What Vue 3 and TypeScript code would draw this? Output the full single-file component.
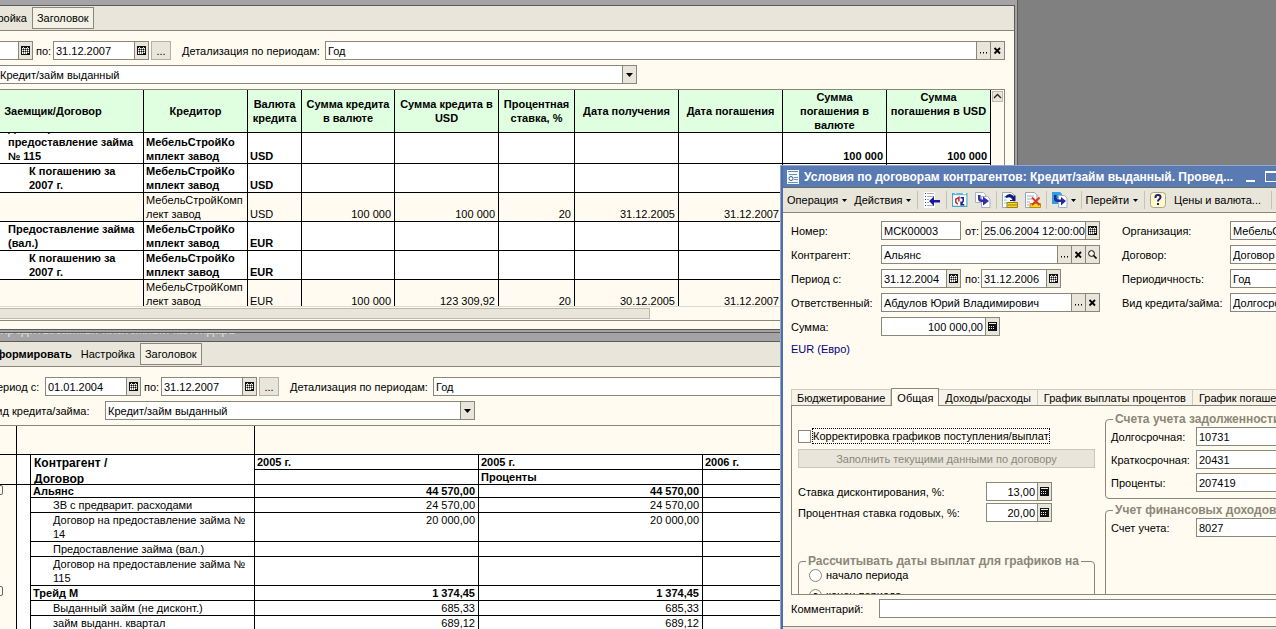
<script setup lang="ts">
import { ref } from 'vue'

interface LoanRow {
  name: string
  level: number
  creditor: string
  currency: string
  cells: string[]
}

interface PaymentRow {
  name: string
  bold: boolean
  group?: boolean
  first: string
  second: string
}

const loanHeaders: string[] = [
  'Заемщик/Договор',
  'Кредитор',
  'Валюта\nкредита',
  'Сумма кредита\nв валюте',
  'Сумма кредита в\nUSD',
  'Процентная\nставка, %',
  'Дата получения',
  'Дата погашения',
  'Сумма\nпогашения в\nвалюте',
  'Сумма\nпогашения в USD\n\u00a0',
]

const boldCreditor = 'МебельСтройКо\nмплект завод'
const plainCreditor = 'МебельСтройКомп\nлект завод'

const loans: LoanRow[] = [
  { name: 'Договор на\nпредоставление займа\n№ 115', level: 1, creditor: boldCreditor, currency: 'USD', cells: ['', '', '', '', '', '100 000', '100 000'] },
  { name: 'К погашению за\n2007 г.', level: 2, creditor: boldCreditor, currency: 'USD', cells: ['', '', '', '', '', '', ''] },
  { name: '', level: 3, creditor: plainCreditor, currency: 'USD', cells: ['100 000', '100 000', '20', '31.12.2005', '31.12.2007', '', ''] },
  { name: 'Предоставление займа\n(вал.)', level: 1, creditor: boldCreditor, currency: 'EUR', cells: ['', '', '', '', '', '', ''] },
  { name: 'К погашению за\n2007 г.', level: 2, creditor: boldCreditor, currency: 'EUR', cells: ['', '', '', '', '', '', ''] },
  { name: '', level: 3, creditor: plainCreditor, currency: 'EUR', cells: ['100 000', '123 309,92', '20', '30.12.2005', '31.12.2007', '', ''] },
]

const payments: PaymentRow[] = [
  { name: 'Альянс', bold: true, group: true, first: '44 570,00', second: '44 570,00' },
  { name: 'ЗВ с предварит. расходами', bold: false, first: '24 570,00', second: '24 570,00' },
  { name: 'Договор на предоставление займа №\n14', bold: false, first: '20 000,00', second: '20 000,00' },
  { name: 'Предоставление займа (вал.)', bold: false, first: '', second: '' },
  { name: 'Договор на предоставление займа №\n115', bold: false, first: '', second: '' },
  { name: 'Трейд М', bold: true, group: true, first: '1 374,45', second: '1 374,45' },
  { name: 'Выданный займ (не дисконт.)', bold: false, first: '685,33', second: '685,33' },
  { name: 'займ выданн. квартал', bold: false, first: '689,12', second: '689,12' },
]

const tabs: string[] = ['Бюджетирование', 'Общая', 'Доходы/расходы', 'График выплаты процентов', 'График погашения']
const activeTab = ref('Общая')
const adjustSchedules = ref(false)
const payoutDate = ref('end')

const debtAccounts = [
  { id: 'acc-long', label: 'Долгосрочная:', value: '10731' },
  { id: 'acc-short', label: 'Краткосрочная:', value: '20431' },
  { id: 'acc-percent', label: 'Проценты:', value: '207419' },
]

const contractFields = [
  { id: 'org', label: 'Организация:', value: 'МебельСтройКомплект завод' },
  { id: 'contract', label: 'Договор:', value: 'Договор на предоставление займа' },
  { id: 'period', label: 'Периодичность:', value: 'Год' },
  { id: 'kind', label: 'Вид кредита/займа:', value: 'Долгосрочный' },
]
</script>

<template>
  <main class="desktop">
    <svg class="sprite" aria-hidden="true">
      <symbol id="i-calendar" viewBox="0 0 9 9">
        <path d="M0 0h9v9H0z" fill="#111" />
        <path d="M1 2h7v6H1z" fill="#fff" />
        <path d="M2 1h1v1H2zM6 1h1v1H6z" fill="#ddd" />
        <path d="M2 2h1v6H2zM4 2h1v6H4zM6 2h1v6H6zM1 3h7v1H1zM1 5h7v1H1z" fill="#222" fill-opacity=".55" />
        <path d="M2 3h1v1H2zM4 3h1v1H4zM6 3h1v1H6zM2 5h1v1H2zM4 5h1v1H4zM6 5h1v1H6zM6 7h2v1H6z" fill="#111" />
      </symbol>
      <symbol id="i-calc" viewBox="0 0 9 9">
        <path d="M0 0h9v9H0z" fill="#111" />
        <path d="M1 1h7v1H1zM1 4h1v1H1zM3 4h1v1H3zM5 4h1v1H5zM1 6h1v1H1zM3 6h1v1H3zM5 6h1v1H5z" fill="#eee" />
      </symbol>
      <symbol id="i-cross" viewBox="0 0 9 9">
        <path d="M1.500 2l5.500 5.500M7 2l-5.500 5.500" stroke="#000" stroke-width="1.800" />
      </symbol>
      <symbol id="i-dots" viewBox="0 0 9 9">
        <path d="M1 6h1v1H1zM4 6h1v1H4zM7 6h1v1H7z" fill="#000" />
        <path d="M1 7h1v.5H1zM4 7h1v.5H4zM7 7h1v.5H7z" fill="#000" />
      </symbol>
      <symbol id="i-lens" viewBox="0 0 9 9">
        <circle cx="3.500" cy="3.500" r="2.900" fill="#f6f4ec" stroke="#000" />
        <path d="M5.500 5.500L8.500 8.500" stroke="#000" stroke-width="1.600" />
      </symbol>
      <symbol id="i-down" viewBox="0 0 9 9">
        <path d="M1 3h7L4.500 7z" fill="#000" />
      </symbol>
      <symbol id="i-caret" viewBox="0 0 5 3">
        <path d="M0 0h5L2.500 3z" fill="#000" />
      </symbol>
      <symbol id="i-list-arrow" viewBox="0 0 18 16">
        <path d="M1 0h11v16H1z" fill="#fff" />
        <path d="M2 1h1v1H2zM2 4h1v1H2zM2 7h1v1H2zM2 10h1v1H2zM2 13h1v1H2z" fill="#24b" />
        <path d="M4 1h7v1H4zM4 4h7v1H4zM4 7h2v1H4zM4 10h2v1H4zM4 13h7v1H4z" fill="#aab" />
        <path d="M6 9l5-4.500V8h6v2.500h-6V14z" fill="#1a1aa0" />
      </symbol>
      <symbol id="i-refresh" viewBox="0 0 15 15">
        <path d="M.5 1.500h13.500v12H.5z" fill="#fff" stroke="#48a4c8" />
        <path d="M1 1h13v2H1z" fill="#5cb8dc" />
        <path d="M3 1h1v1H3zM10 1h3v1h-3z" fill="#fff" />
        <path d="M3.500 6v3.500l2 2M3.500 7L6.500 5v4" stroke="#c32c2c" stroke-width="1.400" fill="none" />
        <path d="M8 5.500h2.500v3L8.500 12M8.500 9v3h3" stroke="#1c1c96" stroke-width="1.400" fill="none" />
      </symbol>
      <symbol id="i-copy" viewBox="0 0 16 16">
        <path d="M.5.5h8l2 2v8H.5z" fill="#fff" stroke="#a5b2c4" />
        <path d="M6.500 4.500h6l2.500 2.500v8.500H6.500z" fill="#fff" stroke="#a5b2c4" />
        <path d="M3 3v3.500Q3 10 7 10h1v3.500l6-4.500L8 4.500V7.500H6.500Q5.500 7.500 5.500 5.500V3z" fill="#3030a8" />
      </symbol>
      <symbol id="i-post" viewBox="0 0 16 16">
        <path d="M.5.5h9l2.500 2.500v12.500H.5z" fill="#fff" stroke="#9aa7b8" />
        <path d="M2 5h3M2 8h3M2 11h3" stroke="#7fc8e8" />
        <path d="M5 10.500h10.500V15.500H5z" fill="#f4d531" stroke="#a08000" />
        <path d="M6 13h9" stroke="#a08000" />
        <path d="M3 4.500Q8-.5 12 4.500V3.500h1.500V9H8V8h2.500Q9 4 4.500 6z" fill="#111a80" />
      </symbol>
      <symbol id="i-unpost" viewBox="0 0 16 16">
        <path d="M.5.5h9l2.500 2.500v12.500H.5z" fill="#fff" stroke="#9aa7b8" />
        <path d="M2 4h7M2 7h5M2 10h3M2 13h2" stroke="#a4aaba" />
        <path d="M5 11.500h10.500v4H5z" fill="#f4d531" stroke="#b89000" />
        <path d="M7 5.500l7.500 7.500M14.500 5.500L7 13" stroke="#d83a20" stroke-width="2" />
      </symbol>
      <symbol id="i-based" viewBox="0 0 16 16">
        <path d="M0 0h8l2 2v10H0z" fill="#2f9fe0" />
        <path d="M6.500 3.500h6l2.500 2.500v9.500H6.500z" fill="#fff" stroke="#a5b2c4" />
        <path d="M2 3v4Q2 10 6 10h3v3.500L14 9 9 5v2.500H6Q4.500 7.500 4.500 5V3z" fill="#28289c" />
      </symbol>
      <symbol id="i-help" viewBox="0 0 16 16">
        <rect x=".5" y=".5" width="15" height="15" rx="3" fill="#fffbc8" stroke="#a9a58e" />
        <path d="M5.500 6V5q0-2 2.500-2t2.500 2q0 1.500-1.500 2.500-1 .7-1 2" fill="none" stroke="#1b1b8c" stroke-width="2" />
        <path d="M7 11h2v2H7z" fill="#1b1b8c" />
      </symbol>
      <symbol id="i-doc" viewBox="0 0 12 14">
        <path d="M0 0h12v14H0z" fill="#f4f8ff" />
        <path d="M1 1h10v1H1zM2 4h8v1H2zM7 7h4v1H7zM7 9h4v1H7zM1 12h10v1H1z" fill="#6d8fb2" />
        <circle cx="4" cy="8.500" r="2" fill="none" stroke="#326080" />
      </symbol>
    </svg>

    <section class="window loans" aria-label="Кредиты/займы">
      <header class="titlebar">
        <span class="title">Кредиты/займы</span>
        <button class="sys min" type="button" aria-label="Свернуть"></button>
        <button class="sys max" type="button" aria-label="Развернуть"></button>
        <button class="sys" type="button" aria-label="Закрыть"></button>
      </header>
      <nav class="toolbar">
        <button class="tool strong" type="button">Сформировать</button>
        <button class="tool" type="button">Настройка</button>
        <button class="tool pressed" type="button">Заголовок</button>
      </nav>
      <div class="body">
        <div class="line">
          <label class="lbl-period" for="l-from">Период с:</label>
          <div class="field date"><input id="l-from" value="01.01.2004" /><button type="button" aria-label="Календарь"><svg><use href="#i-calendar" /></svg></button></div>
          <label class="lbl-to" for="l-to">по:</label>
          <div class="field date"><input id="l-to" value="31.12.2007" /><button type="button" aria-label="Календарь"><svg><use href="#i-calendar" /></svg></button></div>
          <button class="more" type="button">...</button>
          <label class="lbl-detail" for="l-detail">Детализация по периодам:</label>
          <div class="field grow"><input id="l-detail" value="Год" /><button type="button" aria-label="Выбрать"><svg><use href="#i-dots" /></svg></button><button type="button" aria-label="Очистить"><svg><use href="#i-cross" /></svg></button></div>
        </div>
        <div class="line">
          <label class="lbl-kind" for="l-kind">Вид кредита/займа:</label>
          <div class="field combo wide"><select id="l-kind"><option>Кредит/займ выданный</option></select><span class="arrow"><svg><use href="#i-down" /></svg></span></div>
        </div>
        <div class="frame">
          <div class="sheet">
            <div class="viewport">
              <table class="grid loan-grid">
                <colgroup>
                  <col class="c-pad" /><col class="c-name" /><col class="c-date" /><col class="c-cur" /><col class="c-sum" /><col class="c-date" /><col class="c-rate" /><col class="c-date" /><col class="c-date" /><col class="c-date" /><col class="c-date" />
                </colgroup>
                <thead>
                  <tr>
                    <th></th>
                    <th v-for="head in loanHeaders" :key="head">{{ head }}</th>
                  </tr>
                </thead>
                <tbody>
                  <tr v-for="(row, i) in loans" :key="i" :class="'level-' + row.level">
                    <td></td>
                    <td class="name"><div :class="{ clipped: i === 0 }">{{ row.name }}</div></td>
                    <td>{{ row.creditor }}</td>
                    <td>{{ row.currency }}</td>
                    <td v-for="(cell, j) in row.cells" :key="j" class="num">{{ cell }}</td>
                  </tr>
                </tbody>
              </table>
            </div>
            <div class="hscroll"><div class="thumb"></div></div>
          </div>
          <div class="vscroll">
            <button type="button" aria-label="Вверх"><svg viewBox="0 0 9 9"><path d="M1 6l3.500-3.500L8 6" fill="none" stroke="#222" stroke-width="1.300" /></svg></button>
          </div>
        </div>
      </div>
    </section>

    <section class="window calendar" aria-label="Платежный календарь">
      <header class="titlebar">
        <span class="title">Кредиты/займы: платежный календарь</span>
      </header>
      <nav class="toolbar">
        <button class="tool strong" type="button">Сформировать</button>
        <button class="tool" type="button">Настройка</button>
        <button class="tool pressed" type="button">Заголовок</button>
      </nav>
      <div class="body">
        <div class="line">
          <label class="lbl-period" for="p-from">Период с:</label>
          <div class="field date"><input id="p-from" value="01.01.2004" /><button type="button" aria-label="Календарь"><svg><use href="#i-calendar" /></svg></button></div>
          <label class="lbl-to" for="p-to">по:</label>
          <div class="field date"><input id="p-to" value="31.12.2007" /><button type="button" aria-label="Календарь"><svg><use href="#i-calendar" /></svg></button></div>
          <button class="more" type="button">...</button>
          <label class="lbl-detail" for="p-detail">Детализация по периодам:</label>
          <div class="field grow"><input id="p-detail" value="Год" /></div>
        </div>
        <div class="line">
          <label class="lbl-kind" for="p-kind">Вид кредита/займа:</label>
          <div class="field combo"><select id="p-kind"><option>Кредит/займ выданный</option></select><span class="arrow"><svg><use href="#i-down" /></svg></span></div>
        </div>
        <div class="frame">
          <div class="viewport">
            <table class="grid pay-grid">
              <colgroup>
                <col class="c-tree" /><col class="c-gap" /><col class="c-wide" /><col class="c-wide" /><col class="c-wide" /><col />
              </colgroup>
              <thead>
                <tr class="spacer">
                  <td class="tree"></td>
                  <td colspan="2"></td>
                  <td colspan="3"></td>
                </tr>
                <tr>
                  <td class="tree" rowspan="2"></td>
                  <td rowspan="2"></td>
                  <th rowspan="2"><div class="corner">Контрагент /<br />Договор</div></th>
                  <th>2005 г.</th>
                  <th>2005 г.</th>
                  <th>2006 г.</th>
                </tr>
                <tr>
                  <th></th>
                  <th>Проценты</th>
                  <th></th>
                </tr>
              </thead>
              <tbody>
                <tr v-for="(row, i) in payments" :key="i" :class="{ strong: row.bold, low: i === 0 }">
                  <td class="tree"><span v-if="row.group" class="bracket"></span></td>
                  <td class="gap"></td>
                  <td class="name">{{ row.name }}</td>
                  <td class="num">{{ row.first }}</td>
                  <td class="num">{{ row.second }}</td>
                  <td></td>
                </tr>
              </tbody>
            </table>
          </div>
        </div>
      </div>
    </section>

    <section class="window terms" aria-label="Условия по договорам контрагентов">
      <header class="titlebar">
        <svg class="doc"><use href="#i-doc" /></svg>
        <span class="title">Условия по договорам контрагентов: Кредит/займ выданный. Провед...</span>
        <button class="sys min" type="button" aria-label="Свернуть"></button>
        <button class="sys max" type="button" aria-label="Развернуть"></button>
      </header>
      <nav class="toolbar">
        <button class="menu" type="button">Операция<svg class="caret"><use href="#i-caret" /></svg></button>
        <button class="menu" type="button">Действия<svg class="caret"><use href="#i-caret" /></svg></button>
        <i class="sep"></i>
        <button class="icon" type="button" aria-label="Найти в списке"><svg class="broad"><use href="#i-list-arrow" /></svg></button>
        <i class="sep"></i>
        <button class="icon" type="button" aria-label="Перечитать"><svg><use href="#i-refresh" /></svg></button>
        <button class="icon" type="button" aria-label="Скопировать"><svg><use href="#i-copy" /></svg></button>
        <i class="sep"></i>
        <button class="icon" type="button" aria-label="Провести"><svg><use href="#i-post" /></svg></button>
        <button class="icon" type="button" aria-label="Отмена проведения"><svg><use href="#i-unpost" /></svg></button>
        <i class="sep"></i>
        <button class="icon" type="button" aria-label="Ввести на основании"><svg><use href="#i-based" /></svg><svg class="caret"><use href="#i-caret" /></svg></button>
        <i class="sep"></i>
        <button class="menu" type="button">Перейти<svg class="caret"><use href="#i-caret" /></svg></button>
        <i class="sep"></i>
        <button class="icon" type="button" aria-label="Справка"><svg><use href="#i-help" /></svg></button>
        <button class="menu" type="button">Цены и валюта...</button>
        <i class="sep"></i>
      </nav>
      <div class="body">
        <div class="form">
          <div class="main-fields">
            <label for="t-num">Номер:</label>
            <div class="line">
              <div class="field short"><input id="t-num" value="МСК00003" /></div>
              <label class="mid" for="t-date">от:</label>
              <div class="field grow"><input id="t-date" value="25.06.2004 12:00:00" /><button type="button" aria-label="Календарь"><svg><use href="#i-calendar" /></svg></button></div>
            </div>
            <label for="t-partner">Контрагент:</label>
            <div class="field"><input id="t-partner" value="Альянс" /><button type="button" aria-label="Выбрать"><svg><use href="#i-dots" /></svg></button><button type="button" aria-label="Очистить"><svg><use href="#i-cross" /></svg></button><button type="button" aria-label="Открыть"><svg><use href="#i-lens" /></svg></button></div>
            <label for="t-from">Период с:</label>
            <div class="line">
              <div class="field short"><input id="t-from" value="31.12.2004" /><button type="button" aria-label="Календарь"><svg><use href="#i-calendar" /></svg></button></div>
              <label class="mid" for="t-to">по:</label>
              <div class="field short"><input id="t-to" value="31.12.2006" /><button type="button" aria-label="Календарь"><svg><use href="#i-calendar" /></svg></button></div>
            </div>
            <label for="t-person">Ответственный:</label>
            <div class="field"><input id="t-person" value="Абдулов Юрий Владимирович" /><button type="button" aria-label="Выбрать"><svg><use href="#i-dots" /></svg></button><button type="button" aria-label="Очистить"><svg><use href="#i-cross" /></svg></button></div>
            <label for="t-sum">Сумма:</label>
            <div class="field sum"><input id="t-sum" class="right" value="100 000,00" /><button type="button" aria-label="Калькулятор"><svg><use href="#i-calc" /></svg></button></div>
          </div>
          <div class="contract-fields">
            <template v-for="f in contractFields" :key="f.id">
              <label :for="f.id">{{ f.label }}</label>
              <div class="field"><input :id="f.id" :value="f.value" /></div>
            </template>
          </div>
        </div>
        <p class="currency">EUR (Евро)</p>

        <div class="tabs" role="tablist">
          <button v-for="tab in tabs" :key="tab" type="button" role="tab" :aria-selected="tab === activeTab" :class="{ active: tab === activeTab }" @click="activeTab = tab">{{ tab }}</button>
        </div>
        <div class="panel" role="tabpanel">
          <div class="left">
            <label class="check"><input v-model="adjustSchedules" type="checkbox" /><span>Корректировка графиков поступления/выплат</span></label>
            <button class="fill" type="button" disabled>Заполнить текущими данными по договору</button>
            <div class="rates">
              <label for="r-disc">Ставка дисконтирования, %:</label>
              <div class="field"><input id="r-disc" class="right" value="13,00" /><button type="button" aria-label="Калькулятор"><svg><use href="#i-calc" /></svg></button></div>
              <label for="r-year">Процентная ставка годовых, %:</label>
              <div class="field"><input id="r-year" class="right" value="20,00" /><button type="button" aria-label="Калькулятор"><svg><use href="#i-calc" /></svg></button></div>
            </div>
            <fieldset class="dates">
              <legend>Рассчитывать даты выплат для графиков на</legend>
              <label class="radio"><input v-model="payoutDate" type="radio" name="payout" value="start" />начало периода</label>
              <label class="radio"><input v-model="payoutDate" type="radio" name="payout" value="end" />конец периода</label>
            </fieldset>
          </div>
          <div class="right-side">
            <fieldset>
              <legend>Счета учета задолженности</legend>
              <div class="accounts">
                <template v-for="a in debtAccounts" :key="a.id">
                  <label :for="a.id">{{ a.label }}</label>
                  <div class="field"><input :id="a.id" :value="a.value" /></div>
                </template>
              </div>
            </fieldset>
            <fieldset class="tall">
              <legend>Учет финансовых доходов/расходов</legend>
              <div class="accounts">
                <label for="acc-fin">Счет учета:</label>
                <div class="field"><input id="acc-fin" value="8027" /></div>
              </div>
            </fieldset>
          </div>
        </div>
        <div class="comment">
          <label for="t-comment">Комментарий:</label>
          <div class="field grow"><input id="t-comment" value="" /></div>
        </div>
      </div>
      <footer class="bottom"></footer>
    </section>
  </main>
</template>

<style>
html,
body {
  margin: 0;
  overflow: hidden;
}
</style>

<style scoped>
* {
  box-sizing: border-box;
}

.desktop {
  position: relative;
  height: 100vh;
  overflow: hidden;
  background: #808080;
  color: #000;
  font: 11px/14px "Liberation Sans", Arial, sans-serif;
}

.sprite {
  position: absolute;
  width: 0;
  height: 0;
}

button,
input,
select {
  margin: 0;
  padding: 0;
  border: 0;
  border-radius: 0;
  background: none;
  color: inherit;
  font: inherit;
}

label {
  white-space: nowrap;
}

.window {
  position: absolute;
  display: flex;
  flex-direction: column;
  background: #a4a3a5;
}

.loans {
  z-index: 2;
  top: -18px;
  left: -131px;
  right: 258px;
  height: 351px;
  padding: 0 2px 2px;
  border: 1px solid #5c5a55;
}

.calendar {
  z-index: 1;
  top: 318px;
  left: -23px;
  right: 258px;
  bottom: -20px;
  padding: 0 2px 2px;
  border: 1px solid #5c5a55;
}

.terms {
  z-index: 3;
  top: 165px;
  left: 780px;
  right: -22px;
  bottom: -19px;
  padding: 0 2px 2px;
  border: 1px solid #8ea6d0;
  background: #4f6ea8;
}

.titlebar {
  display: flex;
  flex: none;
  align-items: center;
  height: 21px;
  padding-left: 20px;
  color: #d4d2cc;
  font-size: 12px;
  font-weight: bold;
}

.loans .titlebar,
.calendar .titlebar {
  height: 22px;
}

.title {
  flex: 1;
  overflow: hidden;
  white-space: nowrap;
}

.sys {
  flex: none;
  width: 12px;
  height: 11px;
  margin-left: 6px;
}

.sys.min {
  border-bottom: 2px solid currentColor;
}

.sys.max {
  border: 1px solid currentColor;
  border-top-width: 2px;
}

.loans .titlebar {
  padding-right: 6px;
}

.terms .titlebar {
  padding: 0 18px 0 4px;
  background: #5a7ab4;
  color: #fff;
}

.terms .sys.min {
  width: 9px;
  margin-right: 4px;
}

.doc {
  flex: none;
  width: 12px;
  height: 14px;
  margin-right: 5px;
}

.toolbar {
  display: flex;
  flex: none;
  align-items: center;
  height: 26px;
  border: 1px solid #5c5a55;
  border-bottom-color: #8b8778;
  background: #e8e5da;
  white-space: nowrap;
}

.tool {
  height: 22px;
  margin-right: 1px;
  padding: 0 3px;
  border: 1px solid transparent;
}

.tool.strong {
  padding-left: 6px;
  font-weight: bold;
}

.tool.pressed {
  padding: 0 4px;
  border-color: #8b8778;
  background: #f4f1e6;
}

.body {
  display: flex;
  flex: 1;
  flex-direction: column;
  min-height: 0;
  gap: 5px;
  padding: 10px 9px 8px 8px;
  border: 1px solid #5c5a55;
  border-top: 0;
  background: #fffbf0;
}

.line {
  display: flex;
  flex: none;
  align-items: center;
}

.field {
  display: flex;
  min-width: 0;
  height: 19px;
  border: 1px solid #8b8778;
  background: #fff;
}

.field input,
.field select {
  flex: 1;
  width: 0;
  min-width: 0;
  padding: 0 0 0 2px;
  outline: 0;
  appearance: none;
}

.field button,
.arrow {
  display: flex;
  flex: none;
  align-items: center;
  justify-content: center;
  width: 14px;
  border-left: 1px solid #8b8778;
  background: #e8e5da;
}

.field svg {
  width: 9px;
  height: 9px;
}

.field .right {
  padding-right: 2px;
  text-align: right;
}

.grow {
  flex: 1;
}

.date {
  width: 96px;
}

.lbl-period {
  width: 56px;
}

.lbl-to {
  width: 20px;
  padding-left: 3px;
}

.lbl-detail {
  width: 154px;
  padding-left: 11px;
}

.lbl-kind {
  width: 116px;
}

.more {
  width: 20px;
  height: 19px;
  margin-left: 2px;
  border: 1px solid #b4b0a2;
  background: #e8e5da;
}

.combo {
  width: 370px;
}

.combo.wide {
  width: 640px;
}

.frame {
  display: flex;
  flex: 1;
  min-height: 0;
  border: 1px solid #8b8778;
}

.sheet {
  display: flex;
  flex: 1;
  flex-direction: column;
  min-width: 0;
}

.viewport {
  flex: 1;
  min-height: 0;
  overflow: hidden;
}

.hscroll {
  display: grid;
  flex: none;
  grid-template-columns: 9fr 4fr;
  height: 14px;
  padding: 1px 0;
  border-top: 1px solid #dcd9ce;
}

.thumb {
  height: 11px;
  border: 1px solid #bdb9a6;
  background: #e8e5da;
}

.vscroll {
  flex: none;
  width: 13px;
  padding: 1px;
}

.vscroll button {
  display: block;
  width: 11px;
  height: 11px;
  border: 1px solid #bdb9a6;
  background: #e8e5da;
}

.vscroll svg {
  display: block;
  width: 9px;
  height: 9px;
}

.grid {
  width: 100%;
  border-spacing: 0;
  table-layout: fixed;
}

.grid td,
.grid th {
  padding: 0 2px;
  border-right: 1px solid #000;
  border-bottom: 1px solid #000;
  background: #fff;
  text-align: left;
  vertical-align: bottom;
  white-space: pre;
}

.grid td.num {
  padding-right: 3px;
  text-align: right;
}

.loan-grid th {
  padding: 0;
  height: 43px;
  background: #dfffe0;
  text-align: center;
  vertical-align: middle;
}

.loan-grid th:first-child,
.loan-grid td:first-child {
  border-right: 0;
}

.c-pad {
  width: 81px;
}

.c-name {
  width: 181px;
}

.c-date {
  width: 104px;
}

.c-cur {
  width: 54px;
}

.c-sum {
  width: 93px;
}

.c-rate {
  width: 76px;
}

.level-1,
.level-2,
.strong {
  font-weight: bold;
}

.level-1 .name {
  padding-left: 45px;
}

.level-2 .name {
  padding-left: 66px;
}

.level-3 td {
  background: #fffbf0;
}

.clipped {
  display: flex;
  align-items: flex-end;
  height: 30px;
  overflow: hidden;
}

.calendar .body {
  padding-right: 0;
}

.c-tree {
  width: 27px;
}

.c-gap {
  width: 14px;
}

.c-wide {
  width: 224px;
}

.pay-grid .spacer td,
.pay-grid .tree {
  background: #fffbf0;
}

.pay-grid .spacer td {
  height: 29px;
}

.pay-grid th {
  height: 15px;
}

.pay-grid th[rowspan] {
  height: 30px;
  vertical-align: top;
}

.pay-grid tbody .tree,
.pay-grid tbody .gap {
  border-bottom: 0;
}

.pay-grid tbody td {
  height: 15px;
  vertical-align: top;
}

.pay-grid tbody .low td {
  height: 13px;
  line-height: 12px;
}

.pay-grid tbody .name {
  padding-left: 22px;
}

.pay-grid tbody .strong .name {
  padding-left: 2px;
}

.corner {
  height: 29px;
  padding-left: 1px;
  overflow: hidden;
  font-size: 12px;
  line-height: 16px;
}

.bracket {
  display: block;
  width: 11px;
  height: 10px;
  border: 1px solid #666;
  border-radius: 2px;
}

.terms .toolbar {
  height: 26px;
  padding-left: 3px;
  border-width: 1px 0;
  border-top-color: #6d6a62;
}

.menu,
.icon {
  display: flex;
  align-items: center;
  height: 22px;
}

.menu {
  padding: 0 4px 0 1px;
}

.menu + .menu {
  padding-left: 3px;
}

.icon + .menu {
  padding: 0 8px 0 5px;
}

.icon {
  padding: 0 3px;
}

.icon + .icon {
  padding-left: 4px;
}

.icon svg {
  width: 16px;
  height: 16px;
}

.icon svg.broad {
  width: 18px;
}

.icon svg.caret,
.caret {
  flex: none;
  width: 5px;
  height: 3px;
  margin-left: 4px;
}

.icon svg.caret {
  margin-left: 3px;
}

.sep {
  width: 1px;
  height: 18px;
  margin: 0 2px;
  background: #c6c2b4;
}

.terms .body {
  gap: 0;
  padding: 8px 0 8px 8px;
  border-width: 0;
  overflow: hidden;
}

.form {
  display: flex;
  flex: none;
  gap: 22px;
}

.main-fields,
.contract-fields {
  display: grid;
  align-content: start;
  align-items: center;
  row-gap: 5px;
}

.main-fields {
  grid-template-columns: 90px 219px;
}

.contract-fields {
  flex: 1;
  grid-template-columns: 108px 1fr;
}

.short {
  width: 80px;
}

.mid {
  width: 20px;
  padding-left: 4px;
}

.sum {
  width: 119px;
}

.currency {
  margin: 6px 0 32px;
  color: #000080;
}

.tabs {
  display: flex;
  flex: none;
  align-items: flex-end;
  height: 18px;
  margin-bottom: -1px;
  white-space: nowrap;
}

.tabs button {
  flex: none;
  height: 17px;
  padding: 0 5px;
  border: 1px solid #cfcbbd;
  border-width: 1px 1px 0 0;
  background: #f7f3e8;
}

.tabs button:first-child {
  border-left-width: 1px;
}

.tabs .active {
  z-index: 1;
  height: 18px;
  border-color: #8b8778;
  border-left-width: 1px;
  background: #fffbf0;
}

.tabs .active ~ button {
  padding: 0 6px;
}

.panel {
  display: flex;
  flex: 1;
  gap: 10px;
  min-height: 0;
  padding: 6px 4px 0 6px;
  border: 1px solid #8b8778;
  border-right: 0;
  overflow: hidden;
}

.left {
  display: flex;
  flex: none;
  flex-direction: column;
  width: 297px;
  padding-top: 17px;
}

.check {
  display: flex;
  align-items: center;
  gap: 2px;
  height: 15px;
}

.check span {
  outline: 1px dotted #000;
}

.check input {
  width: 13px;
  height: 13px;
  border: 1px solid #8b8778;
  background: #fff;
  appearance: none;
}

.check input:checked {
  box-shadow: inset 0 0 0 3px #fff;
  background: #000;
}

.fill {
  flex: none;
  height: 19px;
  margin: 6px 0 14px;
  border: 1px solid #cbc8ba;
  background: #e8e5da;
  color: #8b8778;
}

.rates {
  display: grid;
  grid-template-columns: 188px 66px;
  align-items: center;
  row-gap: 2px;
}

fieldset {
  flex: none;
  min-width: 0;
  margin: 0;
  padding: 1px 5px 6px 5px;
  border: 1px solid #8b8778;
  border-radius: 4px;
}

legend {
  margin-left: 2px;
  padding: 0 2px;
  color: #8b8778;
  font-size: 12px;
  font-weight: bold;
  white-space: nowrap;
}

.dates {
  height: 80px;
  margin-top: 32px;
  padding: 0 10px;
}

.dates legend {
  margin-left: -3px;
}

.radio {
  display: flex;
  align-items: center;
  gap: 4px;
  height: 14px;
  margin-bottom: 6px;
}

.radio input {
  width: 13px;
  height: 13px;
  border: 1px solid #8b8778;
  border-radius: 50%;
  background: #fff;
  appearance: none;
}

.radio input:checked {
  background: radial-gradient(circle, #000 0 2px, #fff 3px);
}

.right-side {
  display: flex;
  flex: 1;
  flex-direction: column;
  gap: 4px;
  min-width: 0;
}

.accounts {
  display: grid;
  grid-template-columns: 85px 1fr;
  align-items: center;
  row-gap: 4px;
}

.tall {
  height: 110px;
}

.comment {
  display: flex;
  flex: none;
  align-items: center;
  margin-top: 4px;
}

.comment label {
  width: 88px;
}

.bottom {
  flex: none;
  height: 19px;
  border-top: 1px solid #8b8778;
  background: #e8e5da;
}
</style>
